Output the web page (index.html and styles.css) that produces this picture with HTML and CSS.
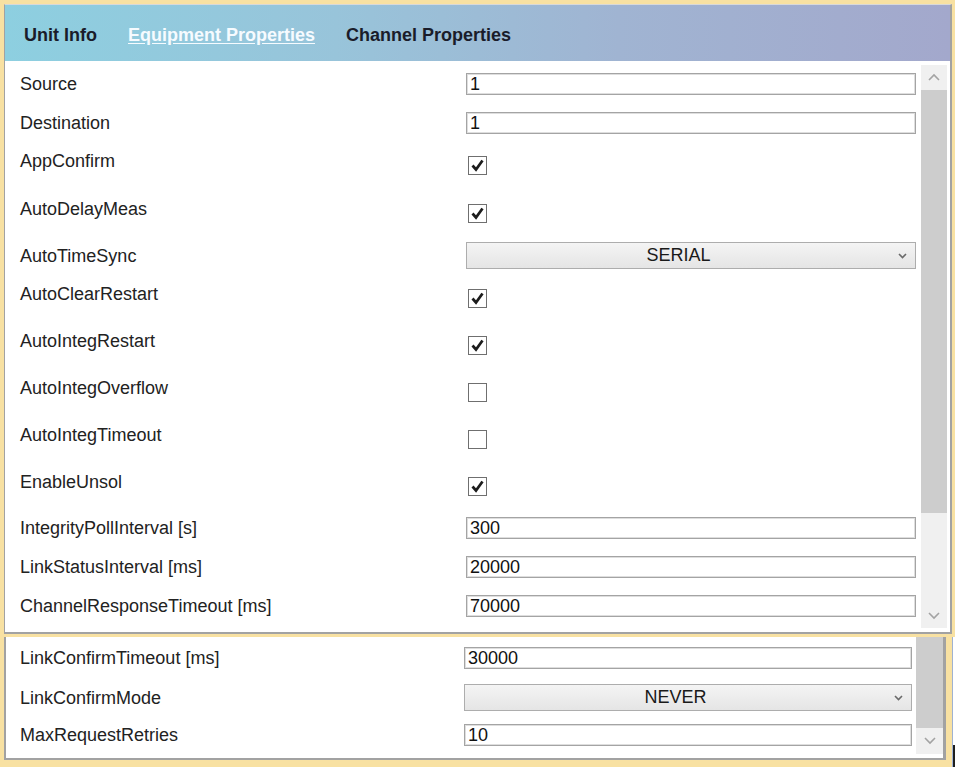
FILE: index.html
```html
<!DOCTYPE html>
<html>
<head>
<meta charset="utf-8">
<link rel="stylesheet" href="styles.css">
</head>
<body>
<div class="top">
  <div class="frame">
    <div class="tabs">
      <span class="tab">Unit Info</span>
      <span class="tab active">Equipment Properties</span>
      <span class="tab">Channel Properties</span>
    </div>
    <div class="body">
      <div class="rows rows-top">
        <div class="row text"><span class="lbl">Source</span><input class="field" type="text" value="1"></div>
        <div class="row text"><span class="lbl">Destination</span><input class="field" type="text" value="1"></div>
        <div class="row check first-check"><span class="lbl">AppConfirm</span><span class="cb"><svg width="17" height="17" viewBox="0 0 17 17"><path d="M3.5 8.5 L7 12.5 L13.5 3.5" fill="none" stroke="#1c1c1c" stroke-width="2.7"/></svg></span></div>
        <div class="row check"><span class="lbl">AutoDelayMeas</span><span class="cb"><svg width="17" height="17" viewBox="0 0 17 17"><path d="M3.5 8.5 L7 12.5 L13.5 3.5" fill="none" stroke="#1c1c1c" stroke-width="2.7"/></svg></span></div>
        <div class="row sel"><span class="lbl">AutoTimeSync</span><div class="select"><span class="sval">SERIAL</span><svg class="chev" width="9" height="6" viewBox="0 0 9 6"><path d="M1 1 L4.5 4.5 L8 1" fill="none" stroke="#6a6a6a" stroke-width="1.6"/></svg></div></div>
        <div class="row check"><span class="lbl">AutoClearRestart</span><span class="cb"><svg width="17" height="17" viewBox="0 0 17 17"><path d="M3.5 8.5 L7 12.5 L13.5 3.5" fill="none" stroke="#1c1c1c" stroke-width="2.7"/></svg></span></div>
        <div class="row check"><span class="lbl">AutoIntegRestart</span><span class="cb"><svg width="17" height="17" viewBox="0 0 17 17"><path d="M3.5 8.5 L7 12.5 L13.5 3.5" fill="none" stroke="#1c1c1c" stroke-width="2.7"/></svg></span></div>
        <div class="row check"><span class="lbl">AutoIntegOverflow</span><span class="cb"></span></div>
        <div class="row check"><span class="lbl">AutoIntegTimeout</span><span class="cb"></span></div>
        <div class="row check"><span class="lbl">EnableUnsol</span><span class="cb"><svg width="17" height="17" viewBox="0 0 17 17"><path d="M3.5 8.5 L7 12.5 L13.5 3.5" fill="none" stroke="#1c1c1c" stroke-width="2.7"/></svg></span></div>
        <div class="row text"><span class="lbl">IntegrityPollInterval [s]</span><input class="field" type="text" value="300"></div>
        <div class="row text"><span class="lbl">LinkStatusInterval [ms]</span><input class="field" type="text" value="20000"></div>
        <div class="row text"><span class="lbl">ChannelResponseTimeout [ms]</span><input class="field" type="text" value="70000"></div>
      </div>
      <div class="vscroll vscroll-top">
        <div class="sbtn"><svg width="12" height="8" viewBox="0 0 12 8"><path d="M1 7 L6 2 L11 7" fill="none" stroke="#a3a3a3" stroke-width="1.6"/></svg></div>
        <div class="thumb thumb-top"></div>
        <div class="track"></div>
        <div class="sbtn"><svg width="12" height="8" viewBox="0 0 12 8"><path d="M1 1 L6 6 L11 1" fill="none" stroke="#a3a3a3" stroke-width="1.6"/></svg></div>
      </div>
    </div>
  </div>
</div>
<div class="bottom">
  <div class="frame2">
    <div class="rows rows-bottom">
      <div class="row text"><span class="lbl">LinkConfirmTimeout [ms]</span><input class="field" type="text" value="30000"></div>
      <div class="row sel"><span class="lbl">LinkConfirmMode</span><div class="select"><span class="sval">NEVER</span><svg class="chev" width="9" height="6" viewBox="0 0 9 6"><path d="M1 1 L4.5 4.5 L8 1" fill="none" stroke="#6a6a6a" stroke-width="1.6"/></svg></div></div>
      <div class="row text"><span class="lbl">MaxRequestRetries</span><input class="field" type="text" value="10"></div>
    </div>
    <div class="vscroll vscroll-bottom">
      <div class="thumb thumb-bottom"></div>
      <div class="sbtn sbtn-bottom"><svg width="12" height="8" viewBox="0 0 12 8"><path d="M1 1 L6 6 L11 1" fill="none" stroke="#a3a3a3" stroke-width="1.6"/></svg></div>
    </div>
  </div>
</div>
</body>
</html>
```

FILE: styles.css
```css
html, body {
  margin: 0;
  padding: 0;
  background: #ffffff;
}
body {
  font-family: "Liberation Sans", Arial, sans-serif;
  color: #222222;
  width: 964px;
  height: 767px;
  overflow: hidden;
}

/* top panel */
.top {
  width: 948px;
  border-style: solid;
  border-color: #f8e1a2;
  border-width: 4px 3px 3px 4px;
}
.frame {
  border-style: solid;
  border-color: #a2a2a2;
  border-width: 1px 2px 2px 1px;
  border-top-color: #d9d9d9;
  background: #ffffff;
}
.tabs {
  height: 56px;
  box-sizing: border-box;
  padding: 3px 0 0 19px;
  display: flex;
  align-items: center;
  gap: 31px;
  background: linear-gradient(to right, #8dcfe0 0%, #98c4da 35%, #a0b4d2 65%, #a3a8cc 100%);
}
.tab {
  font-weight: bold;
  font-size: 18px;
  line-height: 22px;
  color: #1a1c2a;
}
.tab.active {
  color: #f6fbff;
  text-decoration: underline;
  text-underline-offset: 2px;
}
.body {
  display: flex;
  height: 571px;
}
.rows {
  flex: 1;
  display: flex;
  flex-direction: column;
}
.rows-top {
  padding: 4px 5px 0 15px;
}
.rows-bottom {
  padding: 2px 4px 3px 14px;
}
.row {
  display: grid;
  grid-template-columns: 446px 1fr;
  align-items: start;
  box-sizing: border-box;
}
.rows-bottom .row {
  grid-template-columns: 444px 1fr;
}
.lbl {
  font-size: 18px;
  line-height: 22px;
  color: #222222;
  white-space: nowrap;
}
.row.text { height: 39px; }
.row.text .lbl { margin-top: 8px; }
.row.check { height: 47px; }
.row.check .lbl { margin-top: 9px; }
.row.check.first-check { height: 46px; }
.row.check.first-check .lbl { margin-top: 7px; }
.row.check.first-check .cb { margin-top: 13px; }
.row.sel { height: 38px; }
.row.sel .lbl { margin-top: 9px; }

.field {
  margin: 8px 0 0 0;
  height: 22px;
  box-sizing: border-box;
  width: 100%;
  border: 1px solid #a4a4a4;
  box-shadow: inset 0 0 0 1px #dedede;
  padding: 0 3px;
  font-family: "Liberation Sans", Arial, sans-serif;
  font-size: 18px;
  color: #111111;
  background: #ffffff;
  outline: none;
}
.cb {
  margin: 15px 0 0 2px;
  width: 19px;
  height: 19px;
  box-sizing: border-box;
  border: 1.5px solid #6f6f6f;
  background: #ffffff;
  display: flex;
  align-items: center;
  justify-content: center;
}
.select {
  margin-top: 6px;
  height: 27px;
  box-sizing: border-box;
  border: 1px solid #adadad;
  background: linear-gradient(#f4f4f4, #e5e5e5);
  display: flex;
  align-items: center;
  padding: 0 8px 0 0;
}
.sval {
  flex: 1;
  text-align: center;
  font-size: 18px;
  color: #1a1a1a;
  padding-right: 8px;
}
.chev {
  flex: none;
}

/* scrollbars */
.vscroll {
  display: flex;
  flex-direction: column;
  background: #f0f0f0;
}
.vscroll-top {
  width: 26px;
  margin: 4px 3px 4px 0;
}
.vscroll-bottom {
  width: 27px;
  margin: 0 0 4px 0;
}
.sbtn {
  height: 24px;
  display: flex;
  align-items: center;
  justify-content: center;
  flex: none;
}
.sbtn-bottom {
  height: 26px;
}
.thumb {
  background: #cdcdcd;
  flex: none;
}
.thumb-top {
  height: 423px;
  margin-top: 1px;
}
.thumb-bottom {
  height: 91px;
}
.track {
  flex: 1;
}

/* bottom panel */
.bottom {
  position: relative;
  width: 942px;
  border-style: solid;
  border-color: #f8e1a2;
  border-width: 0 6px 7px 4px;
  box-shadow: 1px 0 0 #9fb2d2;
}
.bottom::after {
  content: "";
  position: absolute;
  left: 949px;
  top: 108px;
  width: 2px;
  height: 30px;
  background: #1e1e1e;
}
.frame2 {
  display: flex;
  height: 121px;
  border-style: solid;
  border-color: #a2a2a2;
  border-width: 0 3px 2px 2px;
  background: #ffffff;
}
```
